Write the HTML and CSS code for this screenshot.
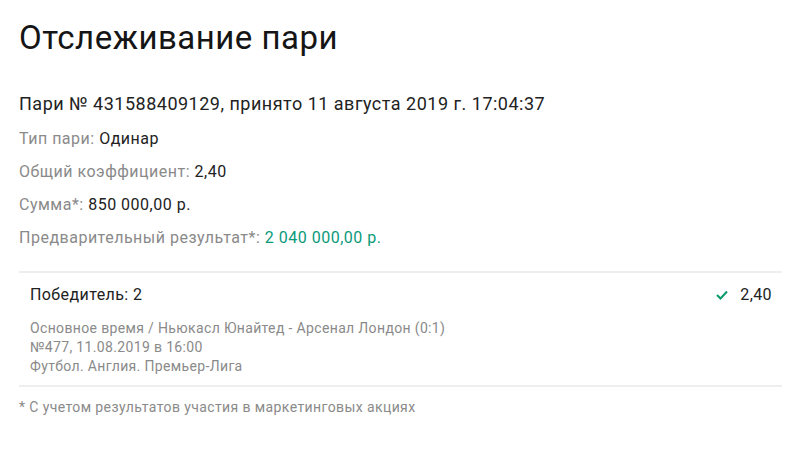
FILE: index.html
```html
<!DOCTYPE html>
<html lang="ru">
<head>
<meta charset="utf-8">
<link rel="stylesheet" href="styles.css">
</head>
<body>
<div class="page">
  <h1 class="title">Отслеживание пари</h1>
  <div class="bet-id">Пари № 431588409129, принято 11 августа 2019 г. 17:04:37</div>
  <div class="info">
    <div class="row"><span class="label">Тип пари:</span> <span class="value">Одинар</span></div>
    <div class="row"><span class="label">Общий коэффициент:</span> <span class="value">2,40</span></div>
    <div class="row"><span class="label">Сумма*:</span> <span class="value">850 000,00 р.</span></div>
    <div class="row"><span class="label">Предварительный результат*:</span> <span class="value green">2 040 000,00 р.</span></div>
  </div>
  <div class="event">
    <div class="event-head">
      <span class="outcome">Победитель: 2</span>
      <span class="coef"><svg class="check" width="12" height="10" viewBox="0 0 12 10"><path d="M1 5 L4.5 8.5 L11 1.5" fill="none" stroke="#0a9a6e" stroke-width="2"/></svg>2,40</span>
    </div>
    <div class="event-desc">
      <div>Основное время / Ньюкасл Юнайтед - Арсенал Лондон (0:1)</div>
      <div>№477, 11.08.2019 в 16:00</div>
      <div>Футбол. Англия. Премьер-Лига</div>
    </div>
  </div>
  <div class="note">* С учетом результатов участия в маркетинговых акциях</div>
</div>
</body>
</html>
```
FILE: styles.css
```css
html, body {
  margin: 0;
  padding: 0;
  background: #fff;
}
body {
  font-family: Roboto, "Noto Sans", sans-serif;
  color: #222;
}
.page {
  width: 763px;
  padding: 15px 0 0 19px;
}
.title {
  margin: 0;
  font-size: 33px;
  font-weight: 400;
  line-height: 46px;
  letter-spacing: 0.5px;
  color: #151515;
}
.bet-id {
  margin-top: 31px;
  font-size: 18px;
  line-height: 24px;
  letter-spacing: 0.5px;
  color: #222;
}
.info {
  margin-top: 6px;
}
.row {
  font-size: 16px;
  line-height: 33px;
  letter-spacing: 0.5px;
}
.label {
  color: #8a8a8a;
}
.value {
  color: #222;
}
.green {
  color: #0a9a7a;
}
.event {
  margin-top: 17px;
  border-top: 2px solid #eeeeee;
  border-bottom: 2px solid #eeeeee;
  padding: 10px 10px 9px 11px;
}
.event-head {
  display: flex;
  justify-content: space-between;
  align-items: center;
  font-size: 16px;
  line-height: 24px;
  letter-spacing: 0.4px;
  color: #222;
}
.coef {
  display: flex;
  align-items: center;
}
.check {
  margin-right: 12px;
}
.event-desc {
  margin-top: 12px;
  font-size: 14px;
  line-height: 19px;
  letter-spacing: 0.35px;
  color: #8a8a8a;
}
.note {
  margin-top: 10px;
  font-size: 14px;
  line-height: 20px;
  letter-spacing: 0.4px;
  color: #8a8a8a;
}
```
